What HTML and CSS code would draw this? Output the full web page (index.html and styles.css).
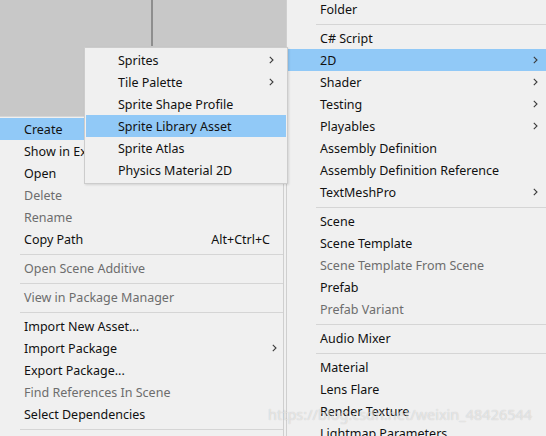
FILE: index.html
```html
<!DOCTYPE html>
<html>
<head>
<meta charset="utf-8">
<link rel="stylesheet" href="styles.css">
</head>
<body>
<div class="scene">
  <div class="scene-pane"></div>
  <div class="scene-pane scene-pane-right"></div>
</div>

<div class="menu menu-main">
  <div class="item hl">Create</div>
  <div class="item">Show in Explorer</div>
  <div class="item">Open</div>
  <div class="item dis">Delete</div>
  <div class="item dis">Rename</div>
  <div class="item"><span>Copy Path</span><span class="shortcut">Alt+Ctrl+C</span></div>
  <div class="sep"></div>
  <div class="item dis">Open Scene Additive</div>
  <div class="sep"></div>
  <div class="item dis">View in Package Manager</div>
  <div class="sep"></div>
  <div class="item">Import New Asset...</div>
  <div class="item"><span>Import Package</span><svg class="arrow" width="5" height="8" viewBox="0 0 5 8"><polyline points="0.8,0.8 4,4 0.8,7.2"/></svg></div>
  <div class="item">Export Package...</div>
  <div class="item dis">Find References In Scene</div>
  <div class="item">Select Dependencies</div>
  <div class="sep"></div>
</div>

<div class="menu menu-create">
  <div class="item">Folder</div>
  <div class="sep"></div>
  <div class="item">C# Script</div>
  <div class="item hl"><span>2D</span><svg class="arrow" width="5" height="8" viewBox="0 0 5 8"><polyline points="0.8,0.8 4,4 0.8,7.2"/></svg></div>
  <div class="item"><span>Shader</span><svg class="arrow" width="5" height="8" viewBox="0 0 5 8"><polyline points="0.8,0.8 4,4 0.8,7.2"/></svg></div>
  <div class="item"><span>Testing</span><svg class="arrow" width="5" height="8" viewBox="0 0 5 8"><polyline points="0.8,0.8 4,4 0.8,7.2"/></svg></div>
  <div class="item"><span>Playables</span><svg class="arrow" width="5" height="8" viewBox="0 0 5 8"><polyline points="0.8,0.8 4,4 0.8,7.2"/></svg></div>
  <div class="item">Assembly Definition</div>
  <div class="item">Assembly Definition Reference</div>
  <div class="item"><span>TextMeshPro</span><svg class="arrow" width="5" height="8" viewBox="0 0 5 8"><polyline points="0.8,0.8 4,4 0.8,7.2"/></svg></div>
  <div class="sep"></div>
  <div class="item">Scene</div>
  <div class="item">Scene Template</div>
  <div class="item dis">Scene Template From Scene</div>
  <div class="item">Prefab</div>
  <div class="item dis">Prefab Variant</div>
  <div class="sep"></div>
  <div class="item">Audio Mixer</div>
  <div class="sep"></div>
  <div class="item">Material</div>
  <div class="item">Lens Flare</div>
  <div class="item">Render Texture</div>
  <div class="item">Lightmap Parameters</div>
</div>

<div class="menu menu-2d">
  <div class="item"><span>Sprites</span><svg class="arrow" width="5" height="8" viewBox="0 0 5 8"><polyline points="0.8,0.8 4,4 0.8,7.2"/></svg></div>
  <div class="item"><span>Tile Palette</span><svg class="arrow" width="5" height="8" viewBox="0 0 5 8"><polyline points="0.8,0.8 4,4 0.8,7.2"/></svg></div>
  <div class="item">Sprite Shape Profile</div>
  <div class="item hl">Sprite Library Asset</div>
  <div class="item">Sprite Atlas</div>
  <div class="item">Physics Material 2D</div>
</div>

<div class="watermark">https://blog.csdn.net/weixin_48426544</div>
</body>
</html>
```

FILE: styles.css
```css
html, body {
  margin: 0;
  padding: 0;
}
body {
  width: 546px;
  height: 436px;
  overflow: hidden;
  position: relative;
  background: #f0f0f0;
  font-family: "Noto Sans", "Liberation Sans", sans-serif;
  font-size: 12.5px;
  color: #111;
}
.scene {
  width: 287px;
  height: 116px;
  background: #c8c8c8;
  display: flex;
  align-items: flex-start;
}
.scene-pane {
  width: 151px;
  height: 46px;
  border-right: 2px solid #8e8e8e;
}
.scene-pane-right {
  flex: 1;
  border-right: none;
}
.menu {
  position: absolute;
  background: #f0f0f0;
  box-sizing: border-box;
  display: flex;
  flex-direction: column;
}
.item {
  height: 22px;
  display: flex;
  align-items: center;
  justify-content: space-between;
  white-space: nowrap;
  flex-shrink: 0;
}
.item.hl {
  background: #91c9f7;
}
.item.dis {
  color: #6d6d6d;
}
.sep {
  height: 7px;
  box-sizing: border-box;
  padding-top: 4px;
  flex-shrink: 0;
}
.sep::after {
  content: "";
  display: block;
  height: 1px;
  background: #d5d5d5;
}
.arrow {
  fill: none;
  stroke: #3c3c3c;
  stroke-width: 1.1;
}
.shortcut {
  color: #111;
}

/* main context menu */
.menu-main {
  left: 0;
  top: 116px;
  width: 284px;
  height: 330px;
  border-top: 1px solid #d6d6d6;
  border-right: 1px solid #cfcfcf;
  padding-top: 1px;
}
.menu-main .item {
  padding: 0 13px 0 24px;
}
.menu-main .arrow {
  margin-right: -7px;
}
.menu-main .sep::after {
  margin-left: 20px;
}

/* Create submenu */
.menu-create {
  left: 286px;
  top: -3px;
  width: 260px;
  height: 450px;
  border-top: 1px solid #cfcfcf;
  border-left: 1px solid #cfcfcf;
  padding-left: 1px;
}
.menu-create .item {
  padding: 0 8px 0 32px;
}
.menu-create .sep::after {
  margin-left: 28px;
}

/* 2D submenu */
.menu-2d {
  left: 84px;
  top: 47px;
  width: 204px;
  border: 1px solid #cccccc;
  padding: 1px 1px 2px 1px;
  box-shadow: 1px 1px 2px rgba(0, 0, 0, 0.12);
}
.menu-2d .item {
  padding: 0 12px 0 32px;
}

.watermark {
  position: absolute;
  left: 268px;
  top: 405px;
  font-family: "Noto Sans", sans-serif;
  font-size: 14.5px;
  line-height: 18px;
  color: rgba(255, 255, 255, 0.55);
  text-shadow: 0 0 1px rgba(0, 0, 0, 0.22);
  white-space: nowrap;
  pointer-events: none;
}
```
